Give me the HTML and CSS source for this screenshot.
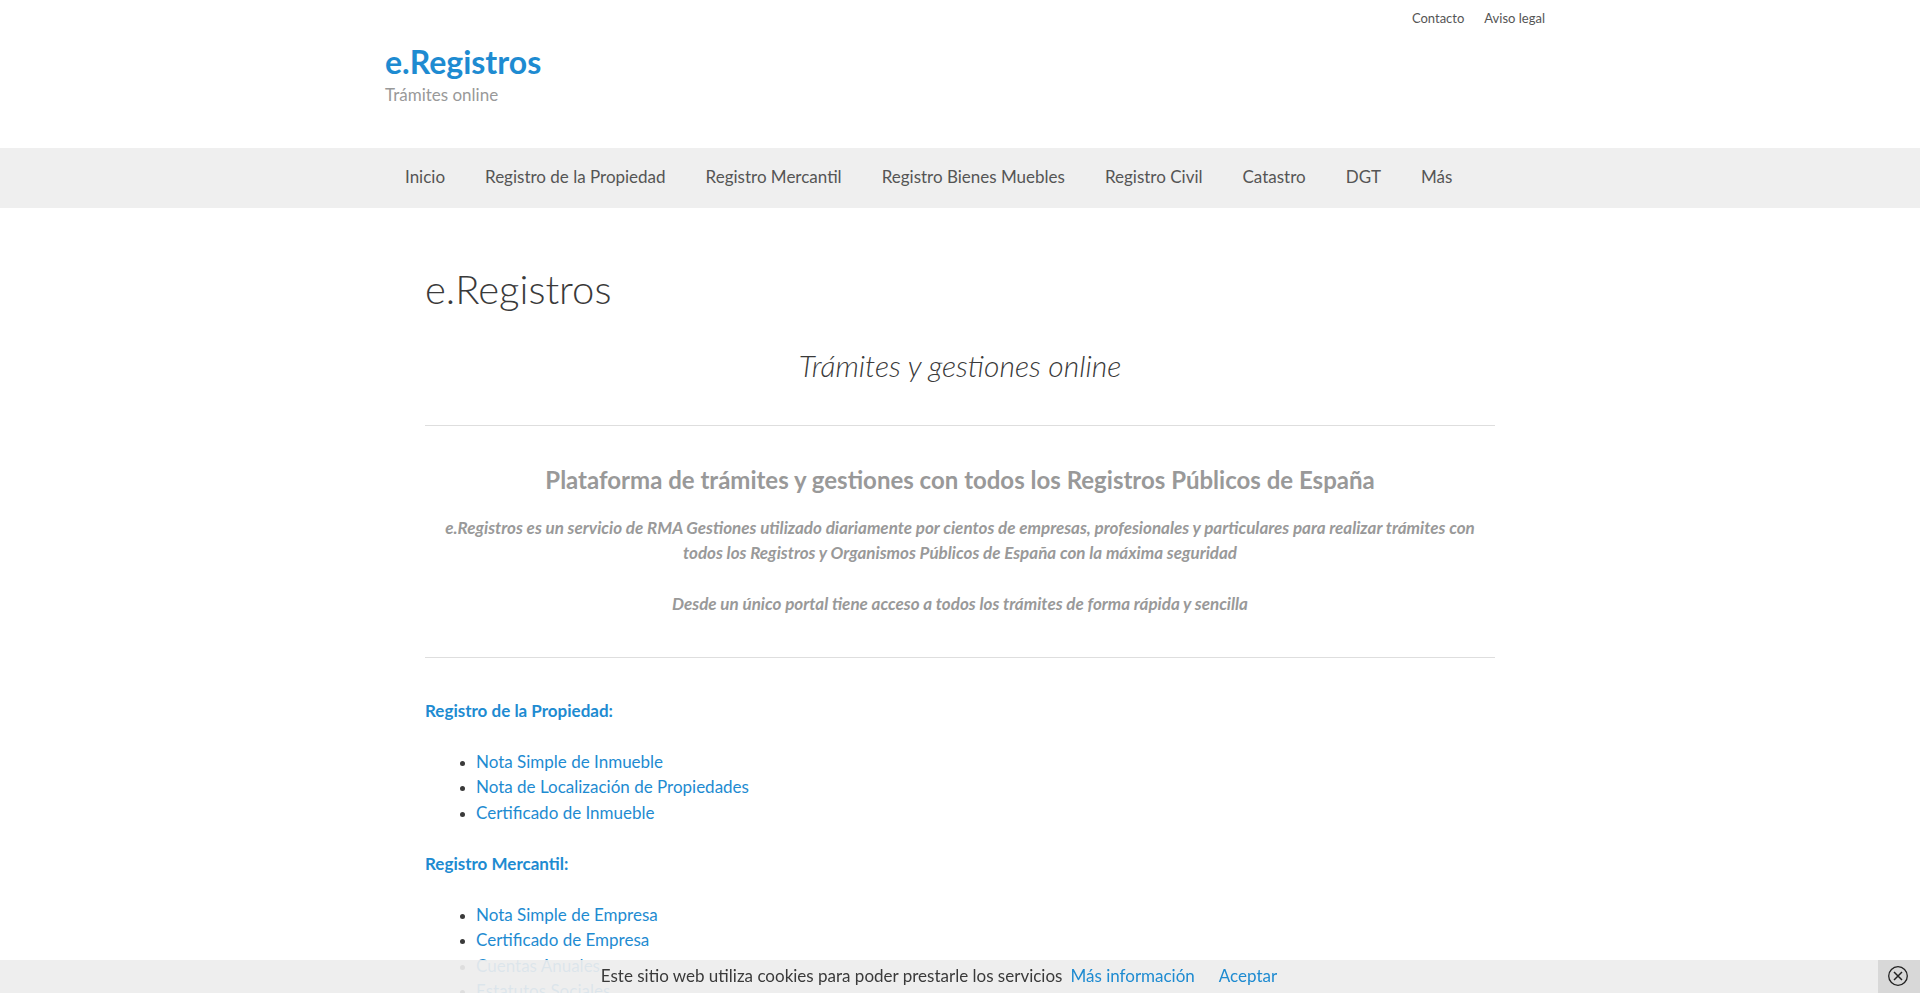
FILE: index.html
```
<!DOCTYPE html>
<html lang="es">
<head>
    <meta charset="UTF-8">
    <meta name="viewport" content="width=device-width, initial-scale=1.0">
    <title>e.Registros - Trámites online</title>
    <link rel="stylesheet" href="styles.css">
</head>
<body>

    <div class="top-bar">
        <a href="#contacto">Contacto</a>
        <a href="#aviso">Aviso legal</a>
    </div>

    <header class="site-header">
        <p class="site-title"><a href="#inicio">e.Registros</a></p>
        <p class="site-description">Trámites online</p>
    </header>

    <nav class="main-nav">
        <ul>
            <li><a href="#inicio">Inicio</a></li>
            <li><a href="#propiedad">Registro de la Propiedad</a></li>
            <li><a href="#mercantil">Registro Mercantil</a></li>
            <li><a href="#muebles">Registro Bienes Muebles</a></li>
            <li><a href="#civil">Registro Civil</a></li>
            <li><a href="#catastro">Catastro</a></li>
            <li><a href="#dgt">DGT</a></li>
            <li><a href="#mas">Más</a></li>
        </ul>
    </nav>

    <main class="content" id="inicio">
        <h1>e.Registros</h1>
        <h2>Trámites y gestiones online</h2>
        <hr>
        <div class="intro">
            <h3>Plataforma de trámites y gestiones con todos los Registros Públicos de España</h3>
            <p>e.Registros es un servicio de RMA Gestiones utilizado diariamente por cientos de empresas, profesionales y particulares para realizar trámites con todos los Registros y Organismos Públicos de España con la máxima seguridad</p>
            <p>Desde un único portal tiene acceso a todos los trámites de forma rápida y sencilla</p>
        </div>
        <hr>

        <p id="propiedad"><a href="#propiedad"><strong>Registro de la Propiedad:</strong></a></p>
        <ul>
            <li><a href="#nota-inmueble">Nota Simple de Inmueble</a></li>
            <li><a href="#localizacion">Nota de Localización de Propiedades</a></li>
            <li><a href="#certificado-inmueble">Certificado de Inmueble</a></li>
        </ul>

        <p id="mercantil"><a href="#mercantil"><strong>Registro Mercantil:</strong></a></p>
        <ul>
            <li><a href="#nota-empresa">Nota Simple de Empresa</a></li>
            <li><a href="#certificado-empresa">Certificado de Empresa</a></li>
            <li><a href="#cuentas">Cuentas Anuales</a></li>
            <li><a href="#estatutos">Estatutos Sociales</a></li>
        </ul>
    </main>

    <div class="cookie-bar">
        <p>
            <span>Este sitio web utiliza cookies para poder prestarle los servicios</span>
            <a href="#cookies">Más información</a>
            <button type="button" class="accept">Aceptar</button>
        </p>
        <button type="button" class="close" aria-label="Cerrar">
            <svg width="20" height="20" viewBox="0 0 20 20" fill="none" stroke="#222">
                <circle cx="10" cy="10" r="9.3" stroke-width="1.3"/>
                <path d="M6 6l8 8M14 6l-8 8" stroke-width="1.5"/>
            </svg>
        </button>
    </div>

</body>
</html>
```
FILE: styles.css
```
body {
    font-family: Lato, sans-serif;
    font-size: 17px;
    line-height: 1.5;
    color: #3a3a3a;
    background-color: #fff;
    margin: 0;
}

a {
    color: #1e8bd1;
    text-decoration: none;
}

a:hover {
    color: #000;
}

.top-bar {
    display: flex;
    justify-content: flex-end;
    gap: 20px;
    max-width: 1170px;
    margin: 0 auto;
    padding: 9px 0;
    font-size: 13px;
}

.top-bar a {
    color: #555;
}

.site-header {
    max-width: 1150px;
    margin: 0 auto;
    padding: 4px 0 41px;
}

.site-header p {
    margin: 0;
}

.site-title {
    font-size: 32px;
    font-weight: bold;
    line-height: 40px;
}

.site-description {
    color: #999;
}

.main-nav {
    background-color: #efefef;
}

.main-nav ul {
    display: flex;
    max-width: 1150px;
    margin: 0 auto;
    padding: 0 0 2px;
    list-style: none;
}

.main-nav a {
    display: block;
    padding: 0 20px;
    line-height: 58px;
    color: #555;
}

.content {
    max-width: 1070px;
    margin: 0 auto;
    padding: 57px 40px 40px;
}

h1, h2, h3 {
    line-height: 1.2;
    margin: 0;
}

h1 {
    font-size: 40px;
    font-weight: 300;
    margin-bottom: 34px;
}

h2 {
    font-size: 30px;
    font-weight: 300;
    font-style: italic;
    text-align: center;
    margin-bottom: 42px;
}

h3 {
    font-size: 24px;
    margin-bottom: 20px;
}

hr {
    height: 1px;
    margin: 40px 0;
    border: 0;
    background-color: #dedede;
}

.intro {
    color: #999;
    text-align: center;
}

.intro p {
    font-style: italic;
    font-weight: bold;
}

.intro p:last-child {
    margin-bottom: 0;
}

.content p {
    margin-top: 0;
}

.content p, .content ul {
    margin-bottom: 1.5em;
}

.content ul {
    margin-top: 0;
    padding-left: 3em;
}

.content li::marker {
    font-size: 14px;
}

.cookie-bar {
    position: fixed;
    left: 0;
    right: 0;
    bottom: 0;
    display: flex;
    background-color: rgba(237, 237, 237, 0.92);
}

.cookie-bar p {
    flex: 1;
    display: flex;
    justify-content: center;
    gap: 8px;
    margin: 0;
    padding: 3px 0 5px;
}

.cookie-bar button {
    border: 0;
    font: inherit;
    cursor: pointer;
}

.cookie-bar .accept {
    margin-left: 16px;
    padding: 0;
    background: none;
    color: #1e8bd1;
}

.cookie-bar .close {
    display: flex;
    align-items: center;
    justify-content: center;
    width: 42px;
    padding: 0 2px 0 0;
    background-color: #d8d8d8;
}
```
